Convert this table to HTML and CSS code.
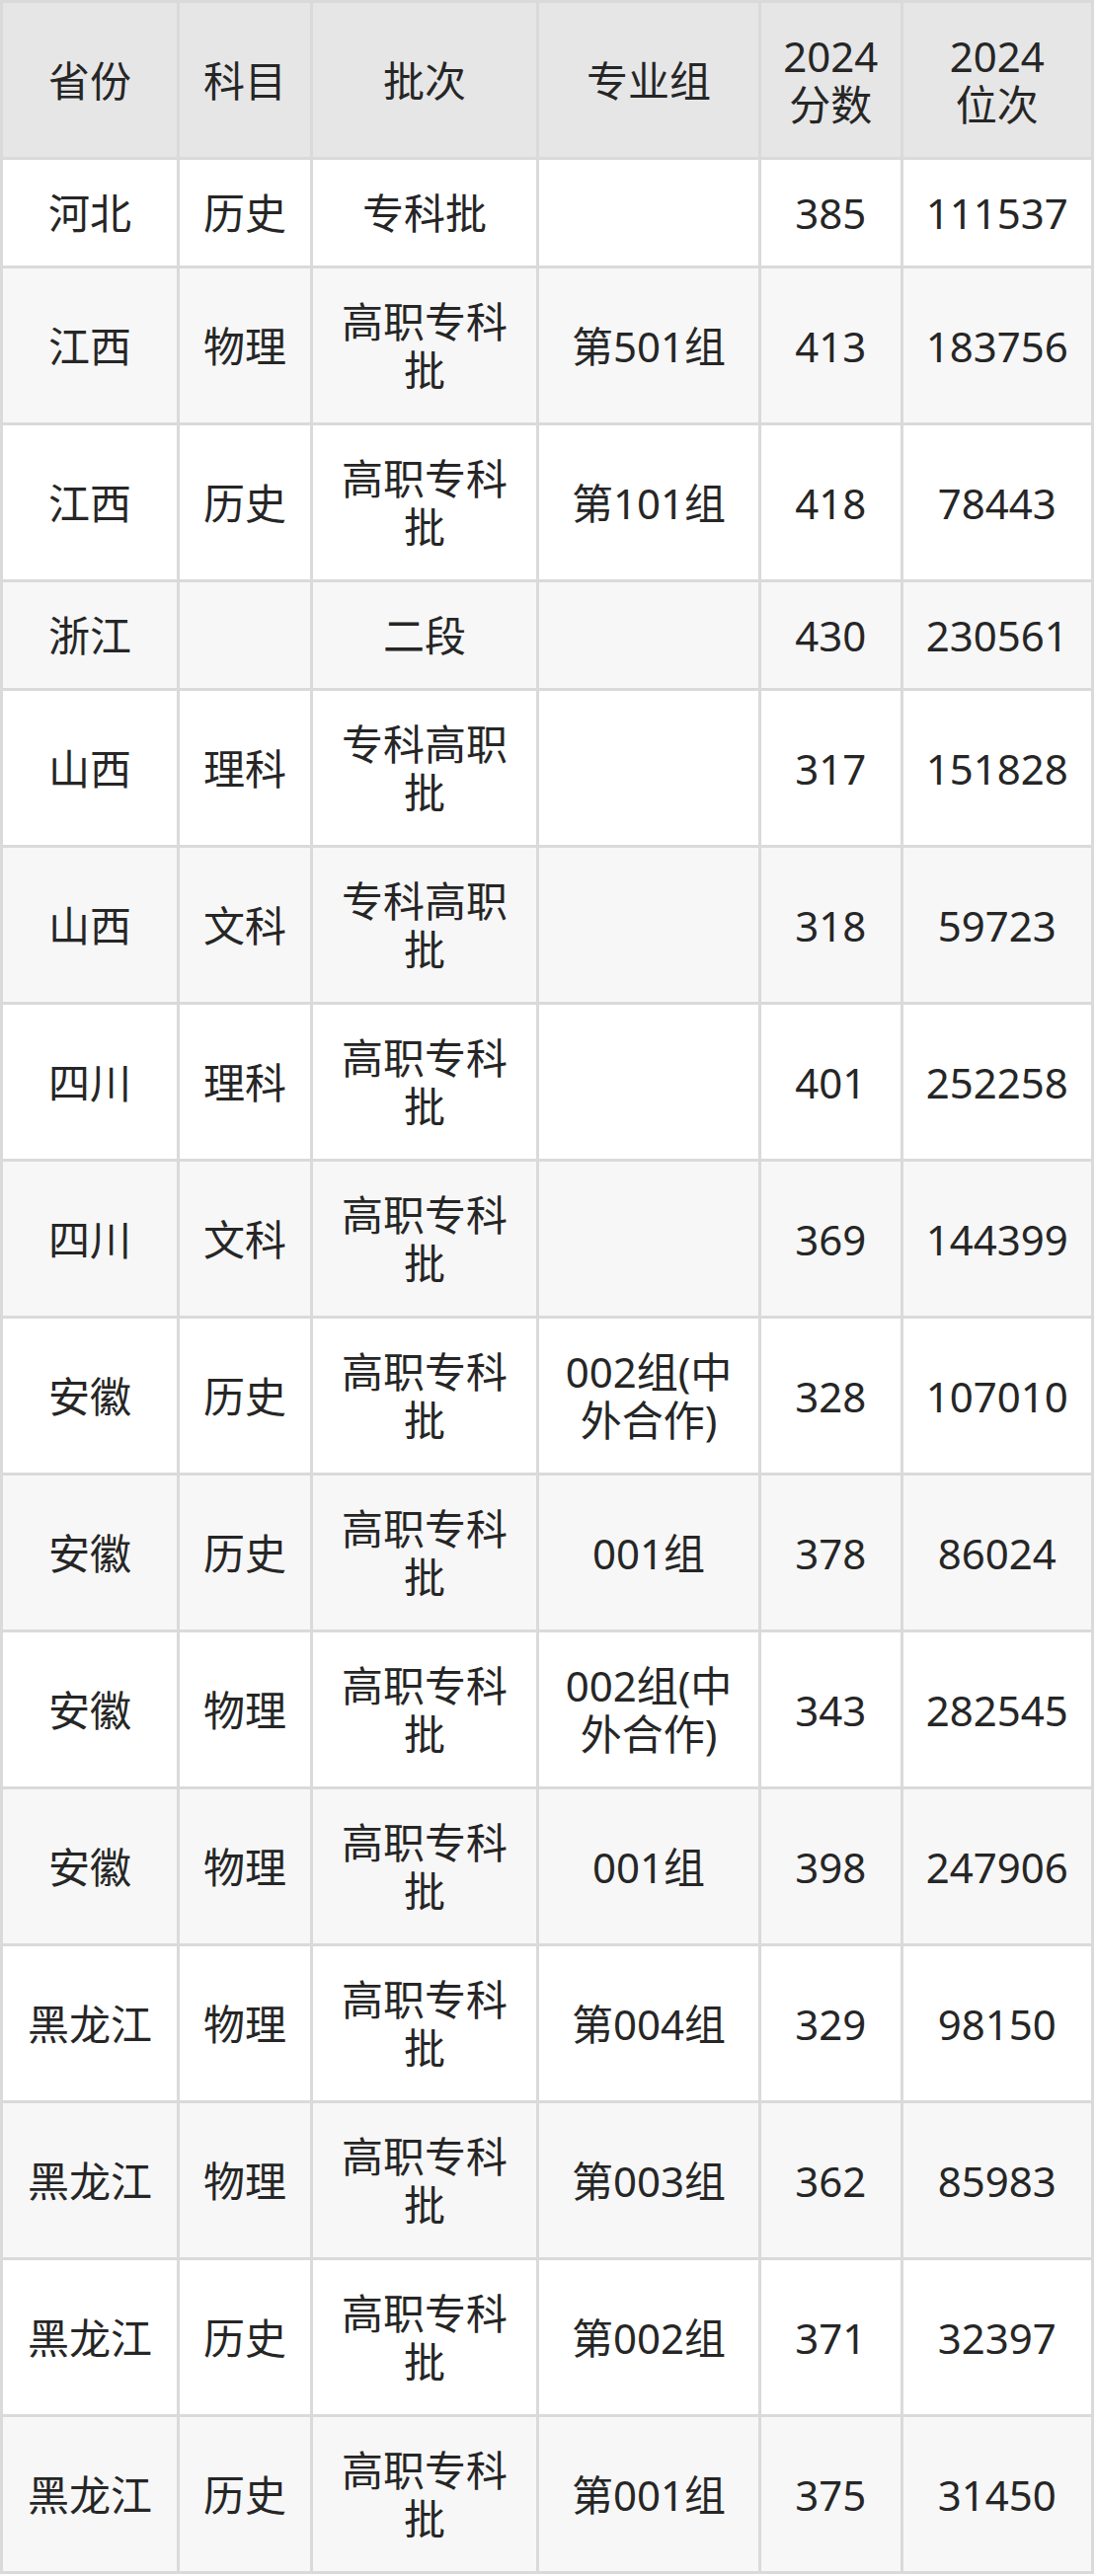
FILE: index.html
```html
<!DOCTYPE html>
<html lang="zh-CN">
<head>
<meta charset="utf-8">
<title>2024 分数位次</title>
<link rel="stylesheet" href="styles.css">
</head>
<body>
<div class="table">
  <div class="row head">
    <div class="cell">省份</div><div class="cell">科目</div><div class="cell">批次</div><div class="cell">专业组</div><div class="cell"><span class="year-label">2024分数</span></div><div class="cell"><span class="year-label">2024位次</span></div>
  </div>
  <div class="row">
    <div class="cell">河北</div><div class="cell">历史</div><div class="cell">专科批</div><div class="cell"></div><div class="cell">385</div><div class="cell">111537</div>
  </div>
  <div class="row alt">
    <div class="cell">江西</div><div class="cell">物理</div><div class="cell">高职专科批</div><div class="cell">第501组</div><div class="cell">413</div><div class="cell">183756</div>
  </div>
  <div class="row">
    <div class="cell">江西</div><div class="cell">历史</div><div class="cell">高职专科批</div><div class="cell">第101组</div><div class="cell">418</div><div class="cell">78443</div>
  </div>
  <div class="row alt">
    <div class="cell">浙江</div><div class="cell"></div><div class="cell">二段</div><div class="cell"></div><div class="cell">430</div><div class="cell">230561</div>
  </div>
  <div class="row">
    <div class="cell">山西</div><div class="cell">理科</div><div class="cell">专科高职批</div><div class="cell"></div><div class="cell">317</div><div class="cell">151828</div>
  </div>
  <div class="row alt">
    <div class="cell">山西</div><div class="cell">文科</div><div class="cell">专科高职批</div><div class="cell"></div><div class="cell">318</div><div class="cell">59723</div>
  </div>
  <div class="row">
    <div class="cell">四川</div><div class="cell">理科</div><div class="cell">高职专科批</div><div class="cell"></div><div class="cell">401</div><div class="cell">252258</div>
  </div>
  <div class="row alt">
    <div class="cell">四川</div><div class="cell">文科</div><div class="cell">高职专科批</div><div class="cell"></div><div class="cell">369</div><div class="cell">144399</div>
  </div>
  <div class="row">
    <div class="cell">安徽</div><div class="cell">历史</div><div class="cell">高职专科批</div><div class="cell">002组(中外合作)</div><div class="cell">328</div><div class="cell">107010</div>
  </div>
  <div class="row alt">
    <div class="cell">安徽</div><div class="cell">历史</div><div class="cell">高职专科批</div><div class="cell">001组</div><div class="cell">378</div><div class="cell">86024</div>
  </div>
  <div class="row">
    <div class="cell">安徽</div><div class="cell">物理</div><div class="cell">高职专科批</div><div class="cell">002组(中外合作)</div><div class="cell">343</div><div class="cell">282545</div>
  </div>
  <div class="row alt">
    <div class="cell">安徽</div><div class="cell">物理</div><div class="cell">高职专科批</div><div class="cell">001组</div><div class="cell">398</div><div class="cell">247906</div>
  </div>
  <div class="row">
    <div class="cell">黑龙江</div><div class="cell">物理</div><div class="cell">高职专科批</div><div class="cell">第004组</div><div class="cell">329</div><div class="cell">98150</div>
  </div>
  <div class="row alt">
    <div class="cell">黑龙江</div><div class="cell">物理</div><div class="cell">高职专科批</div><div class="cell">第003组</div><div class="cell">362</div><div class="cell">85983</div>
  </div>
  <div class="row">
    <div class="cell">黑龙江</div><div class="cell">历史</div><div class="cell">高职专科批</div><div class="cell">第002组</div><div class="cell">371</div><div class="cell">32397</div>
  </div>
  <div class="row alt">
    <div class="cell">黑龙江</div><div class="cell">历史</div><div class="cell">高职专科批</div><div class="cell">第001组</div><div class="cell">375</div><div class="cell">31450</div>
  </div>
</div>
</body>
</html>
```
FILE: styles.css
```css
html, body {
  margin: 0;
  padding: 0;
  background: #ffffff;
}

body {
  font-family: "Noto Sans", "Noto Sans CJK SC", sans-serif;
  font-size: 42px;
  line-height: 49px;
  color: #262626;
}

.table {
  width: 1108px;
  box-sizing: border-box;
  padding: 3px;
  background: #dadada;
  display: flex;
  flex-direction: column;
  gap: 3px;
}

.row {
  display: grid;
  grid-template-columns: 176px 132px 226px 222px 140.5px 190.5px;
  column-gap: 3px;
}

.cell {
  background: #ffffff;
  padding: 29px 15px;
  display: flex;
  flex-direction: column;
  align-items: center;
  justify-content: center;
  text-align: center;
  min-height: 49px;
}

.year-label {
  display: block;
  max-width: 100px;
}

.row.alt .cell {
  background: #f7f7f7;
}

.row.head .cell {
  background: #e6e6e6;
}
```
